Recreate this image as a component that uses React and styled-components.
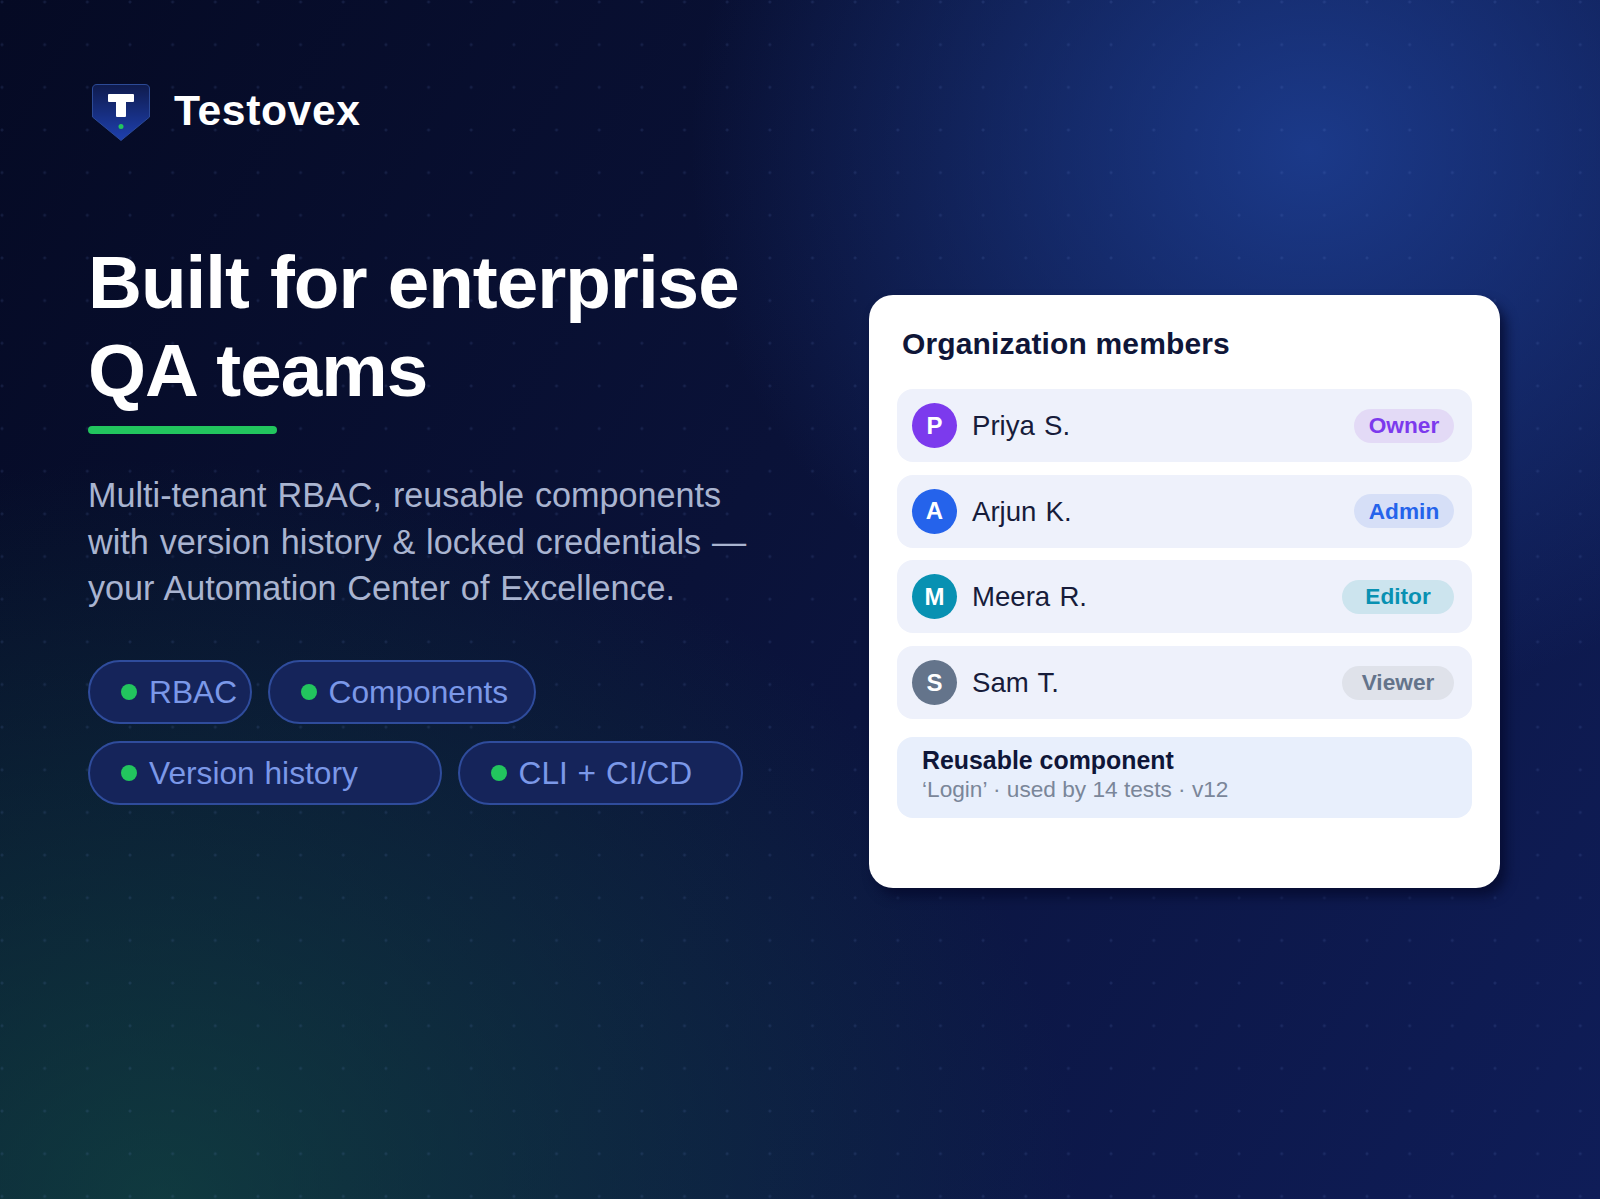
import React from 'react';
import styled, { createGlobalStyle } from 'styled-components';

const chips = [
  [
    { label: 'RBAC', width: 164 },
    { label: 'Components', width: 268 }
  ],
  [
    { label: 'Version history', width: 354 },
    { label: 'CLI + CI/CD', width: 285 }
  ]
];

const members = [
  { name: 'Priya S.', initial: 'P', color: '#7c3aed', tint: '#e3daf6', role: 'Owner', width: 100 },
  { name: 'Arjun K.', initial: 'A', color: '#2563eb', tint: '#d6dff7', role: 'Admin', width: 100 },
  { name: 'Meera R.', initial: 'M', color: '#0891b2', tint: '#cce4ee', role: 'Editor', width: 112 },
  { name: 'Sam T.', initial: 'S', color: '#64748b', tint: '#dfe2ea', role: 'Viewer', width: 112 }
];

const GlobalStyle = createGlobalStyle`
  html, body {
    margin: 0;
    padding: 0;
    background: #0a1238;
  }
`;

const Page = styled.div`
  width: 1600px;
  height: 1199px;
  overflow: hidden;
  display: flex;
  font-family: 'Liberation Sans', Arial, sans-serif;
  background-color: #0b1444;
  background-image:
    radial-gradient(circle at 2px 2px, rgba(120, 150, 230, 0.13) 0, rgba(120, 150, 230, 0.13) 1.2px, transparent 1.8px),
    radial-gradient(ellipse 620px 560px at 1310px 150px, rgba(30, 64, 150, 0.85), transparent 100%),
    radial-gradient(ellipse 920px 740px at 160px 1199px, rgba(20, 83, 70, 0.62), transparent 100%),
    linear-gradient(120deg, #050a24 0%, #0a1238 45%, #0f1d58 100%);
  background-size: 42.67px 42.67px, auto, auto, auto;
`;

const LeftColumn = styled.div`
  box-sizing: border-box;
  width: 781px;
  padding: 84px 0 0 88px;
`;

const Brand = styled.div`
  display: flex;
  align-items: center;
  gap: 24px;
  height: 57px;
  padding-left: 4px;
`;

const BrandName = styled.span`
  padding-bottom: 4px;
  color: #fff;
  font-size: 42.67px;
  font-weight: 700;
  letter-spacing: 0.6px;
`;

const Heading = styled.h1`
  margin: 97px 0 0;
  color: #fff;
  font-size: 74.67px;
  line-height: 88px;
  font-weight: 700;
  letter-spacing: -1px;
  word-spacing: 1.4px;
`;

const Underline = styled.div`
  width: 189px;
  height: 8px;
  margin-top: 12px;
  border-radius: 4px;
  background: #22c55e;
`;

const Lead = styled.p`
  margin: 38px 0 0;
  color: #a9b4d0;
  font-size: 34.2px;
  line-height: 46.67px;
  word-spacing: 1.4px;
`;

const ChipRows = styled.div`
  display: flex;
  flex-direction: column;
  gap: 17px;
  margin-top: 48px;
`;

const ChipRow = styled.div`
  display: flex;
  gap: 15.5px;
`;

const Chip = styled.div`
  box-sizing: border-box;
  width: ${p => p.$width}px;
  height: 64px;
  padding-left: 31px;
  display: flex;
  align-items: center;
  gap: 12px;
  border: 2px solid #2f4c9c;
  border-radius: 32px;
  background: #15245a;
  color: #7b98e8;
  font-size: 31.7px;
  word-spacing: 1px;
`;

const ChipDot = styled.span`
  width: 16px;
  height: 16px;
  border-radius: 50%;
  background: #22c55e;
`;

const RightColumn = styled.div`
  padding: 295px 0 0 88px;
`;

const Card = styled.section`
  box-sizing: border-box;
  width: 631px;
  height: 593px;
  padding: 32px 28px 0;
  border-radius: 24px;
  background: #fff;
  box-shadow: 6px 8px 12px rgba(5, 10, 45, 0.8);
`;

const CardTitle = styled.h2`
  margin: 0 0 28px 5px;
  color: #0f1638;
  font-size: 30px;
  line-height: 34px;
  font-weight: 700;
  letter-spacing: 0.14px;
`;

const MemberList = styled.div`
  display: flex;
  flex-direction: column;
  gap: 12.7px;
`;

const MemberRow = styled.div`
  height: 73px;
  padding: 0 18px 0 15px;
  display: flex;
  align-items: center;
  gap: 15px;
  border-radius: 16px;
  background: #eef1fb;
`;

const Avatar = styled.div`
  width: 45px;
  height: 45px;
  display: flex;
  align-items: center;
  justify-content: center;
  border-radius: 50%;
  background: ${p => p.$color};
  color: #fff;
  font-size: 24px;
  font-weight: 700;
`;

const MemberName = styled.span`
  flex: 1;
  padding-top: 1px;
  color: #171c3a;
  font-size: 27.6px;
  word-spacing: 1.5px;
`;

const RoleBadge = styled.span`
  width: ${p => p.$width}px;
  height: 34px;
  display: flex;
  align-items: center;
  justify-content: center;
  border-radius: 17px;
  background: ${p => p.$tint};
  color: ${p => p.$color};
  font-size: 22.67px;
  font-weight: 700;
`;

const ComponentNote = styled.div`
  box-sizing: border-box;
  height: 81px;
  margin-top: 18px;
  padding: 8px 25px;
  border-radius: 16px;
  background: #e8effc;
`;

const NoteTitle = styled.div`
  color: #0f1638;
  font-size: 24.9px;
  line-height: 30px;
  font-weight: 700;
`;

const NoteText = styled.div`
  color: #7a8699;
  font-size: 22.67px;
  line-height: 28px;
`;

const ShieldLogo = () => (
  <svg width="58" height="57" viewBox="0 0 58 57">
    <defs>
      <linearGradient id="shield" x1="0" y1="0" x2="0" y2="1">
        <stop offset="0" stopColor="#0f1b4d" />
        <stop offset="1" stopColor="#1e40af" />
      </linearGradient>
    </defs>
    <path
      d="M5 .5H53Q57.5 .5 57.5 5V33L29 56.5L.5 33V5Q.5 .5 5 .5Z"
      fill="url(#shield)"
      stroke="#2c4a96"
    />
    <rect x="16" y="10" width="26" height="8" rx="1" fill="#fff" />
    <rect x="24" y="10" width="10" height="23" rx="1" fill="#fff" />
    <circle cx="29" cy="42.5" r="2.5" fill="#22c55e" />
  </svg>
);

const App = () => (
  <Page>
    <GlobalStyle />
    <LeftColumn>
      <Brand>
        <ShieldLogo />
        <BrandName>Testovex</BrandName>
      </Brand>
      <Heading>
        Built for enterprise
        <br />
        QA teams
      </Heading>
      <Underline />
      <Lead>
        Multi-tenant RBAC, reusable components
        <br />
        with version history &amp; locked credentials —
        <br />
        your Automation Center of Excellence.
      </Lead>
      <ChipRows>
        {chips.map((row, i) => (
          <ChipRow key={i}>
            {row.map(chip => (
              <Chip key={chip.label} $width={chip.width}>
                <ChipDot />
                {chip.label}
              </Chip>
            ))}
          </ChipRow>
        ))}
      </ChipRows>
    </LeftColumn>
    <RightColumn>
      <Card>
        <CardTitle>Organization members</CardTitle>
        <MemberList>
          {members.map(member => (
            <MemberRow key={member.name}>
              <Avatar $color={member.color}>{member.initial}</Avatar>
              <MemberName>{member.name}</MemberName>
              <RoleBadge $width={member.width} $tint={member.tint} $color={member.color}>
                {member.role}
              </RoleBadge>
            </MemberRow>
          ))}
        </MemberList>
        <ComponentNote>
          <NoteTitle>Reusable component</NoteTitle>
          <NoteText>‘Login’ · used by 14 tests · v12</NoteText>
        </ComponentNote>
      </Card>
    </RightColumn>
  </Page>
);

export default App;
